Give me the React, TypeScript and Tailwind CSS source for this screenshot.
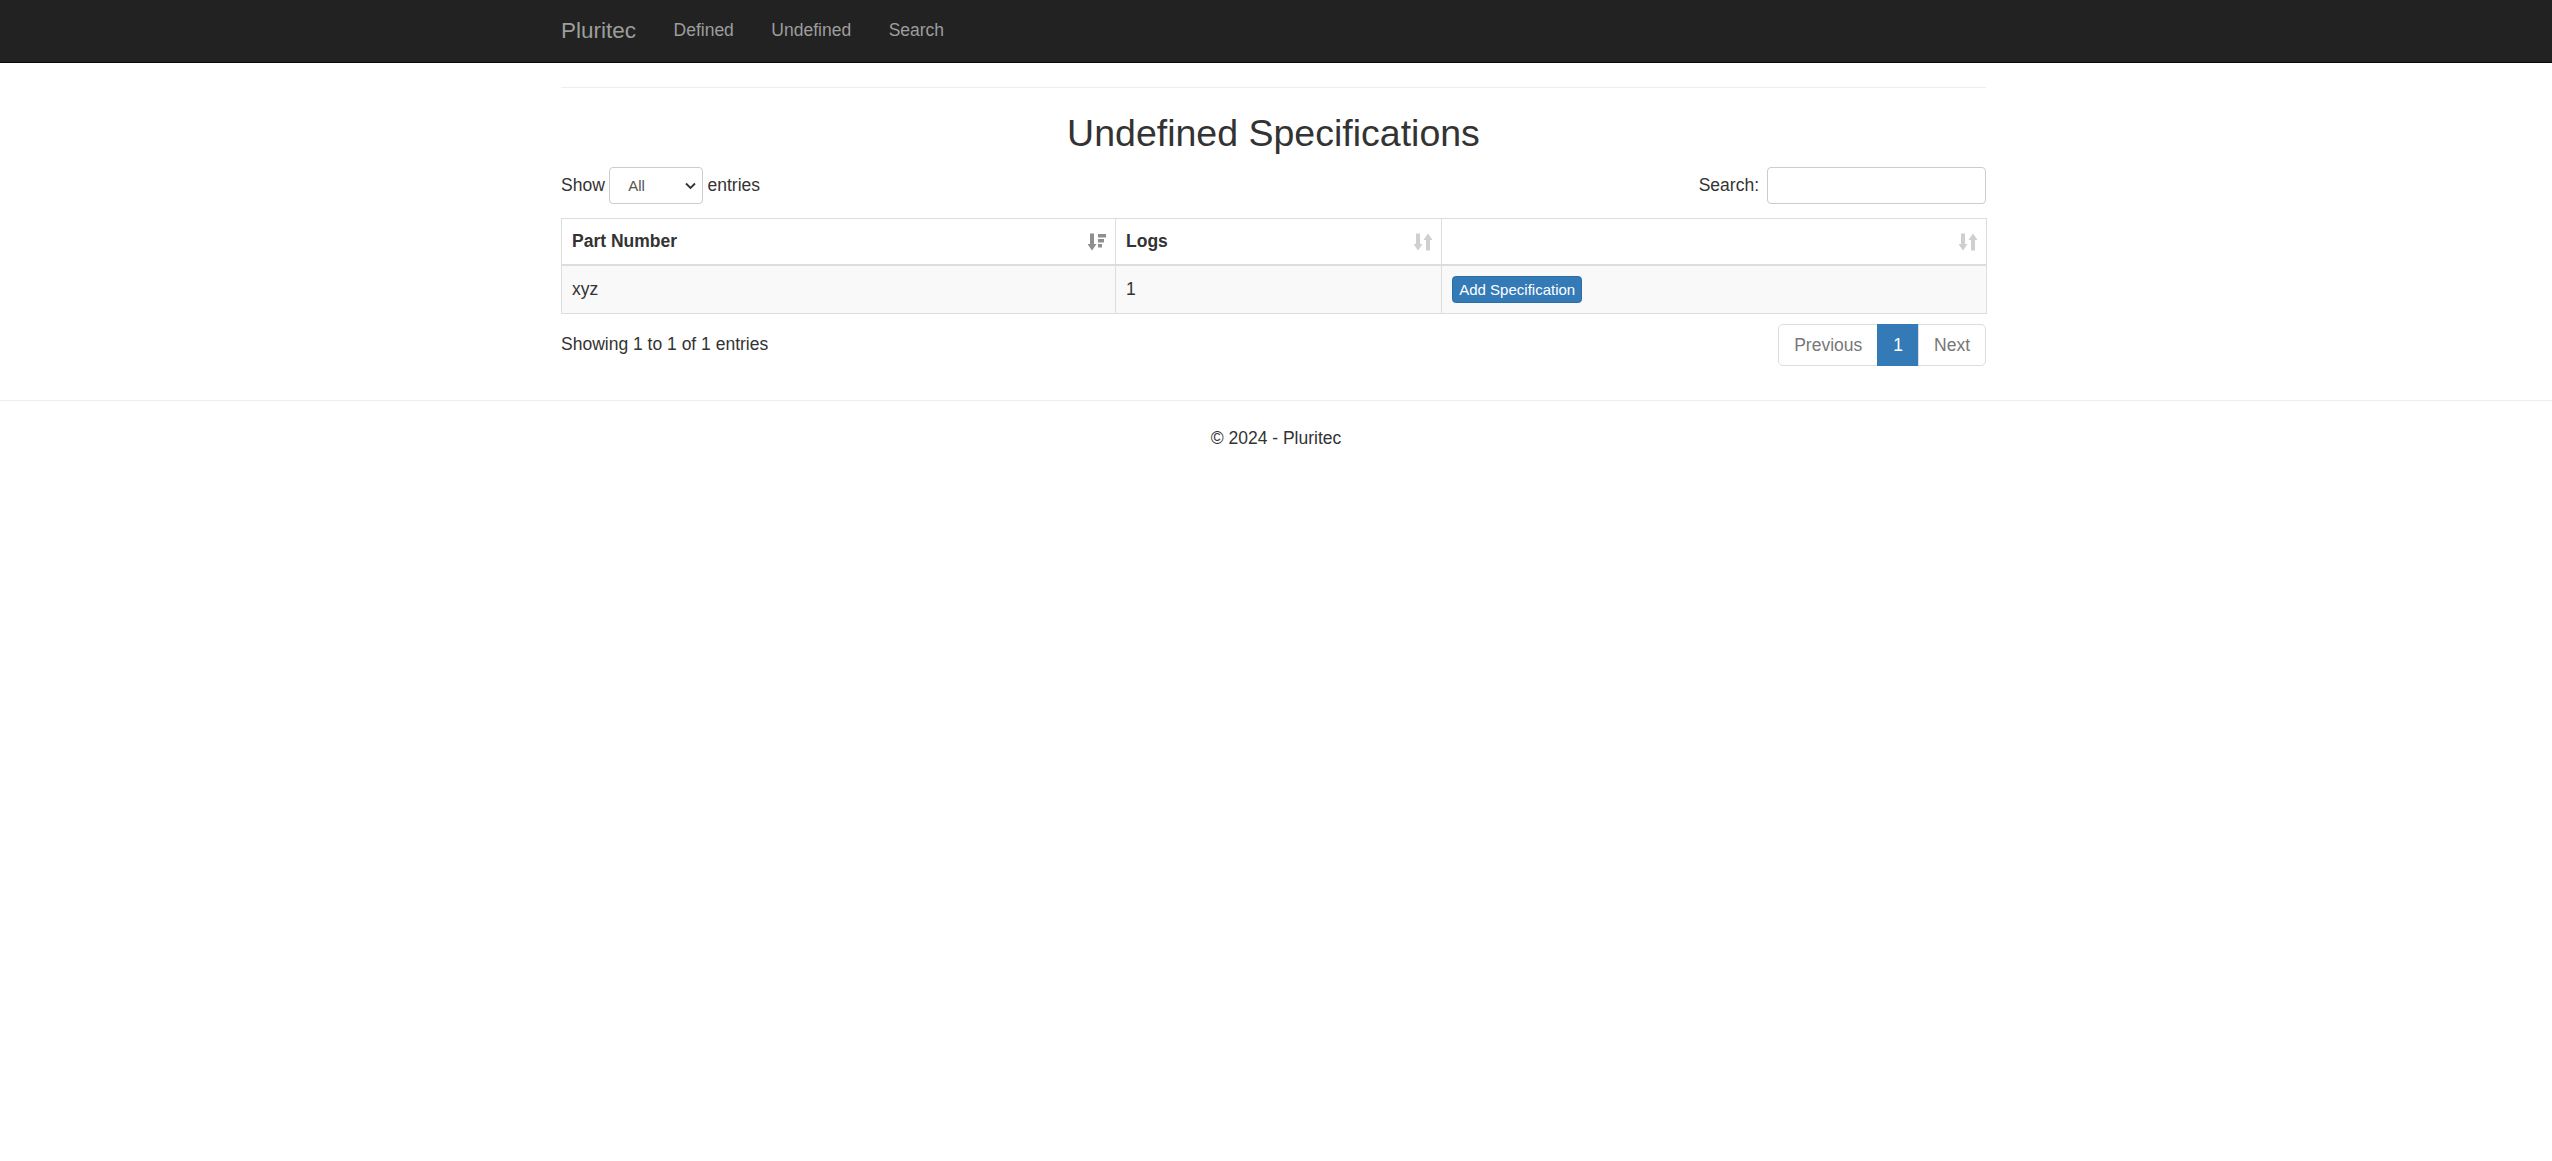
import React from "react";

function SortBoth() {
  return (
    <svg width="18" height="18" viewBox="0 0 18 18" fill="#cfcfcf">
      <rect x="2" y="0.5" width="4" height="11.5" />
      <polygon points="-0.5,11 8.5,11 4,17.5" />
      <polygon points="9.5,7 18.5,7 14,0.5" />
      <rect x="12" y="6" width="4" height="11.5" />
    </svg>
  );
}

function SortActive() {
  return (
    <svg width="18" height="18" viewBox="0 0 18 18" fill="#8f8f8f">
      <rect x="2" y="0.5" width="4" height="11.5" />
      <polygon points="-0.5,11 8.5,11 4,17.5" />
      <rect x="10" y="1" width="8" height="3.5" />
      <rect x="10" y="6" width="6" height="3.5" />
      <rect x="10" y="11" width="4" height="3.5" />
    </svg>
  );
}

export default function App() {
  return (
    <div className="min-h-screen bg-white font-['Liberation_Sans',Arial,sans-serif] text-[17.5px] leading-[25px] text-[#333]">
      <nav className="h-[62.5px] bg-[#222] border-b border-[#080808]">
        <div className="w-[1425px] ml-[561px] h-full flex items-center">
          <span className="text-[22.5px] leading-[25px] text-[#9d9d9d] pr-[18.75px]">Pluritec</span>
          <span className="px-[18.75px] text-[#9d9d9d]">Defined</span>
          <span className="px-[18.75px] text-[#9d9d9d]">Undefined</span>
          <span className="px-[18.75px] text-[#9d9d9d]">Search</span>
        </div>
      </nav>

      <main className="w-[1425px] ml-[561px]">
        <div className="mt-[24.5px] mb-[25px] border-t border-[#eee]" />
        <h2 className="text-[37.5px] leading-[1.1] text-center font-normal mb-[12.5px]">
          Undefined Specifications
        </h2>

        <div className="flex justify-between items-center h-[37.5px]">
          <div className="flex items-center">
            <span>Show</span>
            <div className="mx-[4.5px] w-[93.75px] h-[37.5px] border border-[#ccc] rounded-[4px] flex items-center justify-between pl-[18px] pr-[6px] text-[15px] text-[#555]">
              <span>All</span>
              <svg width="11" height="8" viewBox="0 0 11 8" fill="none" stroke="#333" strokeWidth="1.8">
                <polyline points="1,1.5 5.5,6 10,1.5" />
              </svg>
            </div>
            <span>entries</span>
          </div>
          <div className="flex items-center">
            <span>Search:</span>
            <div className="ml-[8px] w-[219px] h-[37.5px] border border-[#ccc] rounded-[4px]" />
          </div>
        </div>

        <table className="mt-[14px] w-[1425px] table-fixed border-collapse border border-[#ddd]">
          <colgroup>
            <col className="w-[554px]" />
            <col className="w-[326px]" />
            <col className="w-[545px]" />
          </colgroup>
          <thead>
            <tr>
              <th className="relative text-left font-bold pl-[10px] pr-[37.5px] py-[10px] leading-[25px] border border-[#ddd] border-b-2">
                Part Number
                <span className="absolute right-[9px] top-1/2 -translate-y-1/2 flex">
                  <SortActive />
                </span>
              </th>
              <th className="relative text-left font-bold pl-[10px] pr-[37.5px] py-[10px] leading-[25px] border border-[#ddd] border-b-2">
                Logs
                <span className="absolute right-[9px] top-1/2 -translate-y-1/2 flex">
                  <SortBoth />
                </span>
              </th>
              <th className="relative text-left font-bold pl-[10px] pr-[37.5px] py-[10px] leading-[25px] border border-[#ddd] border-b-2">
                <span className="absolute right-[9px] top-1/2 -translate-y-1/2 flex">
                  <SortBoth />
                </span>
              </th>
            </tr>
          </thead>
          <tbody>
            <tr className="bg-[#f9f9f9]">
              <td className="p-[10px] h-[48px] leading-[25px] border border-[#ddd] align-middle">xyz</td>
              <td className="p-[10px] h-[48px] leading-[25px] border border-[#ddd] align-middle">1</td>
              <td className="p-[10px] h-[48px] leading-[25px] border border-[#ddd] align-middle">
                <span className="inline-block align-middle bg-[#337ab7] border border-[#2e6da4] rounded-[3.75px] text-white text-[15px] leading-[22.5px] px-[6.25px] py-[1.25px]">
                  Add Specification
                </span>
              </td>
            </tr>
          </tbody>
        </table>

        <div className="flex justify-between mt-[7.5px]">
          <div className="pt-[10px]">Showing 1 to 1 of 1 entries</div>
          <div className="flex mt-[2.5px]">
            <span className="px-[15px] py-[7.5px] leading-[25px] border border-[#ddd] rounded-l-[5px] text-[#777] bg-white">
              Previous
            </span>
            <span className="-ml-px px-[15px] py-[7.5px] leading-[25px] border border-[#337ab7] bg-[#337ab7] text-white">
              1
            </span>
            <span className="-ml-px px-[15px] py-[7.5px] leading-[25px] border border-[#ddd] rounded-r-[5px] text-[#777] bg-white">
              Next
            </span>
          </div>
        </div>
      </main>

      <footer className="mt-[34px] border-t border-[#eee] pt-[24.5px] text-center">
        <p>© 2024 - Pluritec</p>
      </footer>
    </div>
  );
}
